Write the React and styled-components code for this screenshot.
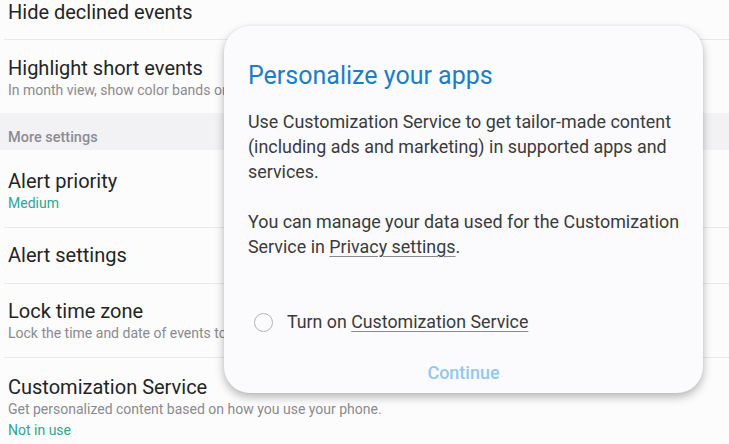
import React from "react";
import styled, { createGlobalStyle } from "styled-components";

const Global = createGlobalStyle`
  html, body {
    margin: 0;
    padding: 0;
    background: #fcfcfd;
    font-family: Roboto, "Liberation Sans", sans-serif;
    overflow: hidden;
  }
`;

const Screen = styled.div`
  position: relative;
  width: 729px;
  height: 444px;
  overflow: hidden;
  background: #fcfcfd;
`;

const List = styled.div`
  display: flex;
  flex-direction: column;
  margin-top: -16px;
`;

const Row = styled.div`
  display: flex;
  flex-direction: column;
  height: ${(p) => p.h}px;
  flex-shrink: 0;
  box-sizing: border-box;
  padding: ${(p) => p.pt}px 0 0 4px;
  margin-left: 4px;
  border-bottom: ${(p) => (p.last ? "none" : "1px solid #e9e9ec")};
`;

const Title = styled.div`
  font-size: 20px;
  color: #242424;
  line-height: 24px;
  white-space: nowrap;
`;

const Sub = styled.div`
  font-size: 14px;
  color: #8a8a8e;
  line-height: 21px;
  white-space: nowrap;
`;

const Value = styled.div`
  font-size: 14px;
  color: #2ea593;
  line-height: 20px;
`;

const Header = styled.div`
  height: 37px;
  flex-shrink: 0;
  box-sizing: border-box;
  background: #f2f2f4;
  padding: 15px 0 0 8px;
  font-size: 14.5px;
  line-height: 20px;
  color: #8c8c90;
  font-weight: 500;
`;

const Dialog = styled.div`
  position: absolute;
  left: 224px;
  top: 26px;
  width: 479px;
  height: 367px;
  box-sizing: border-box;
  background: #fbfbfd;
  border-radius: 26px;
  box-shadow: 0 4px 10px rgba(0, 0, 0, 0.28), 0 0 3px rgba(0, 0, 0, 0.06);
  padding: 36px 14px 0 24px;
  display: flex;
  flex-direction: column;
`;

const DialogTitle = styled.div`
  font-size: 25px;
  color: #1c7ec6;
  line-height: 28px;
  white-space: nowrap;
`;

const Body = styled.p`
  margin: 19px 0 0;
  font-size: 17.9px;
  line-height: 25px;
  color: #3a3a3c;
`;

const Link = styled.span`
  text-decoration: underline;
  text-decoration-color: #8a8a8a;
  text-underline-offset: 3px;
`;

const RadioRow = styled.div`
  display: flex;
  align-items: center;
  gap: 14px;
  margin-top: 51px;
  padding-left: 6px;
  font-size: 17.8px;
  line-height: 24px;
  color: #3a3a3c;
  white-space: nowrap;
`;

const Radio = styled.span`
  width: 17px;
  height: 17px;
  border-radius: 50%;
  border: 1.5px solid #b4b4b8;
  flex-shrink: 0;
`;

const Continue = styled.div`
  margin-top: 27px;
  padding-right: 10px;
  text-align: center;
  font-size: 18px;
  line-height: 24px;
  font-weight: 500;
  color: #92c8ec;
`;

export default function App() {
  return (
    <Screen>
      <Global />
      <List>
        <Row h={56} pt={16}>
          <Title>Hide declined events</Title>
        </Row>
        <Row h={73} pt={16} last>
          <Title>Highlight short events</Title>
          <Sub>In month view, show color bands on short events</Sub>
        </Row>
        <Header>More settings</Header>
        <Row h={78} pt={19}>
          <Title>Alert priority</Title>
          <Value>Medium</Value>
        </Row>
        <Row h={56} pt={15}>
          <Title>Alert settings</Title>
        </Row>
        <Row h={74} pt={15}>
          <Title>Lock time zone</Title>
          <Sub>Lock the time and date of events to your time zone</Sub>
        </Row>
        <Row h={100} pt={17} last>
          <Title>Customization Service</Title>
          <Sub>Get personalized content based on how you use your phone.</Sub>
          <Value>Not in use</Value>
        </Row>
      </List>
      <Dialog>
        <DialogTitle>Personalize your apps</DialogTitle>
        <Body>
          Use Customization Service to get tailor-made content (including ads
          and marketing) in supported apps and services.
          <br />
          <br />
          You can manage your data used for the Customization Service in{" "}
          <Link>Privacy settings</Link>.
        </Body>
        <RadioRow>
          <Radio />
          <span>
            Turn on <Link>Customization Service</Link>
          </span>
        </RadioRow>
        <Continue>Continue</Continue>
      </Dialog>
    </Screen>
  );
}
